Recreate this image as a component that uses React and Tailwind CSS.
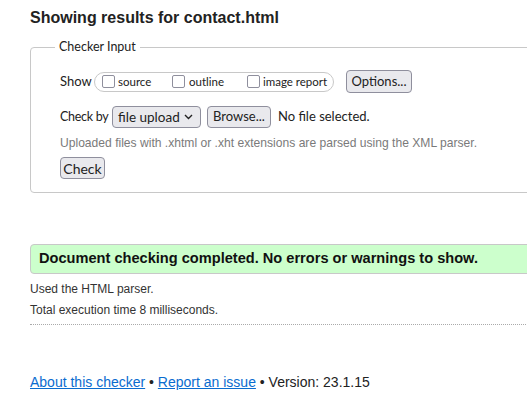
import React from "react";

function Checkbox() {
  return (
    <span className="block w-[13px] h-[13px] border-[1.5px] border-[#8f8f9d] rounded-[2px] bg-white" />
  );
}

function Btn({ children, className = "" }) {
  return (
    <span
      className={`inline-flex shrink-0 items-center justify-center whitespace-nowrap h-[22px] border border-[#8f8f9d] rounded-[4px] bg-[#e9e9ed] text-[13px] text-[#222] ${className}`}
    >
      {children}
    </span>
  );
}

export default function App() {
  return (
    <div className="w-[527px] h-[404px] overflow-hidden bg-white font-['Liberation_Sans',Arial,sans-serif] text-[#222]">
      <div className="w-[640px] pl-[30px]">
        <h2 className="pt-[9px] text-[16px] leading-[18px] font-bold text-[#222]">
          Showing results for contact.html
        </h2>

        {/* Checker Input fieldset */}
        <fieldset className="mt-[12px] border border-[#c8c8c8] rounded-[4px] pl-[29px] pt-[15px] pb-[13px] font-['Lato',sans-serif]">
          <legend className="-ml-[5px] px-[4px] text-[12.5px] leading-[16px] text-[#222]">
            Checker Input
          </legend>

          <div className="flex items-center h-[23px] text-[13px] whitespace-nowrap">
            <span className="w-[31px] shrink-0">Show</span>
            <span className="ml-[3px] flex shrink-0 items-center w-[240px] h-[20px] border border-[#c8c8c8] rounded-full pl-[7px] text-[11.5px]">
              <Checkbox />
              <span className="ml-[3px] w-[32px]">source</span>
              <span className="ml-[22px]"><Checkbox /></span>
              <span className="ml-[4px] w-[35px]">outline</span>
              <span className="ml-[23px]"><Checkbox /></span>
              <span className="ml-[3px]">image report</span>
            </span>
            <Btn className="ml-[12px] w-[66px] h-[23px]">Options...</Btn>
          </div>

          <div className="flex items-center h-[22px] mt-[13px] text-[13px] whitespace-nowrap">
            <span className="w-[48px] shrink-0 tracking-[-0.3px] text-[12.5px]">Check by</span>
            <span className="ml-[4px] inline-flex shrink-0 items-center justify-between w-[89px] h-[22px] border border-[#8f8f9d] rounded-[4px] bg-[#e9e9ed] pl-[5px] pr-[7px] text-[13.5px]">
              file upload
              <svg width="9" height="6" viewBox="0 0 9 6" fill="none">
                <polyline points="1,1 4.5,4.5 8,1" stroke="#222" strokeWidth="1.4" />
              </svg>
            </span>
            <Btn className="ml-[6px] w-[64px] text-[13.5px]">Browse...</Btn>
            <span className="ml-[7px] text-[13px]">No file selected.</span>
          </div>

          <p className="mt-[7px] font-['Liberation_Sans',Arial,sans-serif] text-[12.1px] leading-[16px] text-[#7a7a7a]">
            Uploaded files with .xhtml or .xht extensions are parsed using the XML parser.
          </p>

          <div className="mt-[6px] flex">
            <Btn className="w-[45px] text-[14px]">Check</Btn>
          </div>
        </fieldset>

        {/* Result */}
        <div className="mt-[51px] h-[30px] flex items-center border border-[#c8c8c8] rounded-[4px] bg-[#ccffcc] pl-[8px]">
          <span className="text-[14.6px] font-bold text-[#111]">
            Document checking completed. No errors or warnings to show.
          </span>
        </div>

        <p className="mt-[7px] text-[12px] leading-[16px] text-[#333]">Used the HTML parser.</p>
        <p className="mt-[5px] text-[12px] leading-[16px] text-[#333]">
          Total execution time 8 milliseconds.
        </p>
        <div className="mt-[6px] border-t border-dotted border-[#aaa]" />

        <p className="mt-[48px] text-[14px] leading-[18px] text-[#222]">
          <a href="#" className="text-[#0a6ccf] underline">About this checker</a>
          {" • "}
          <a href="#" className="text-[#0a6ccf] underline">Report an issue</a>
          {" • Version: 23.1.15"}
        </p>
      </div>
    </div>
  );
}
